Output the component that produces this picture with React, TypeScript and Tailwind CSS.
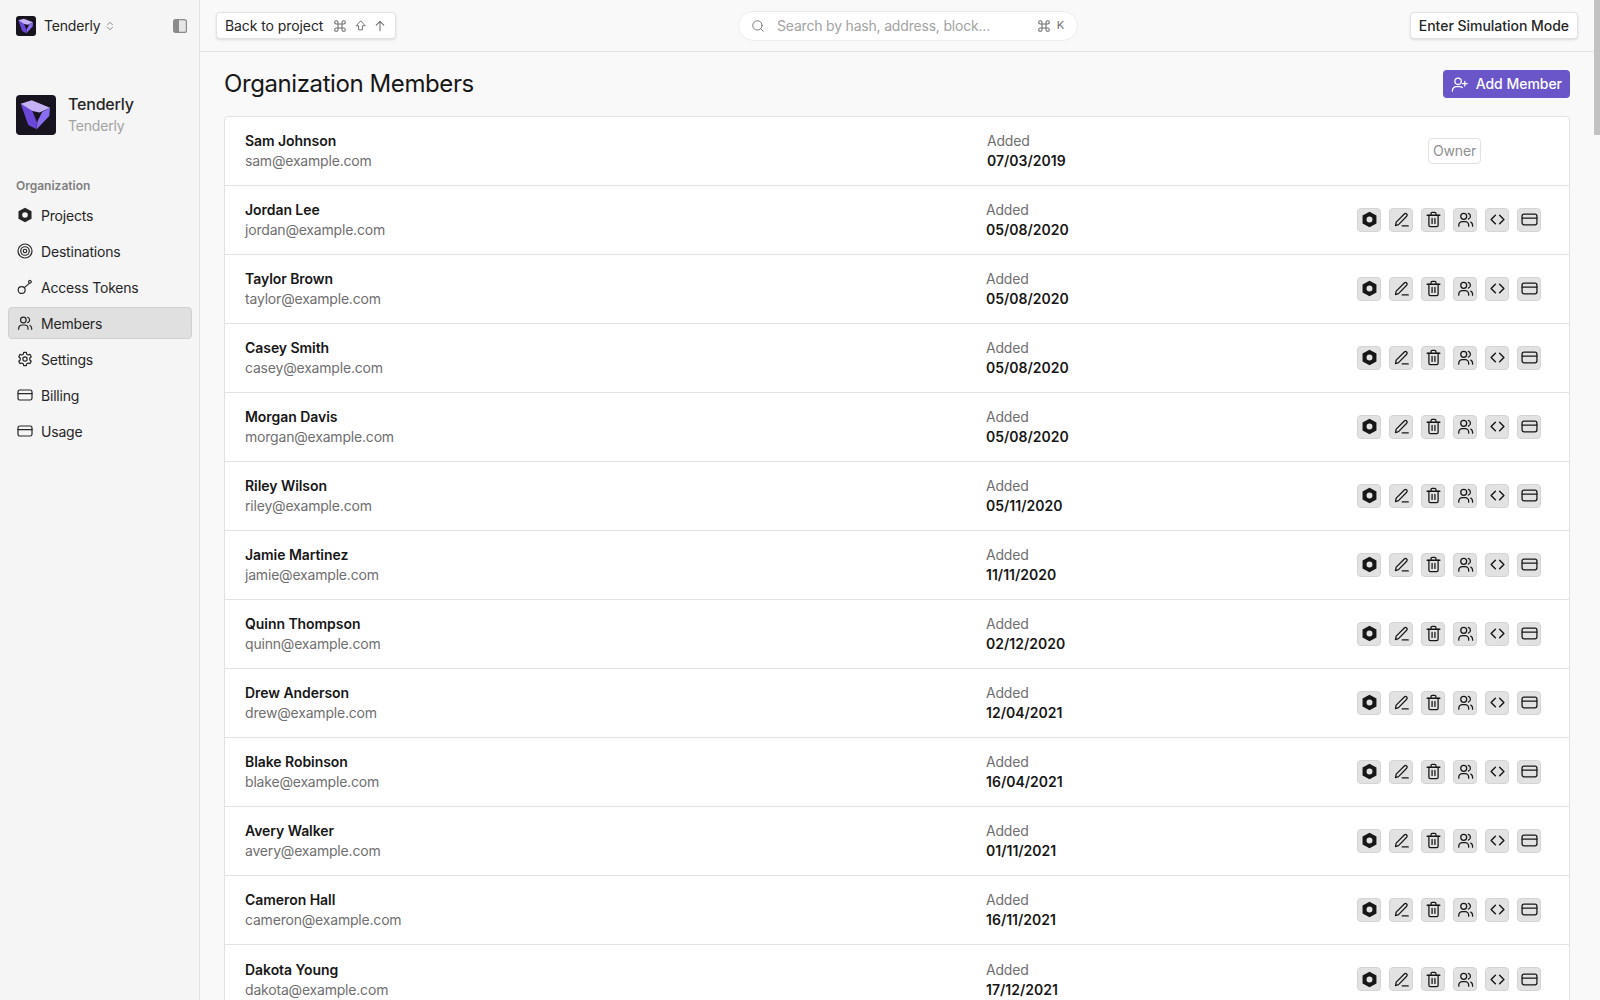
import React from "react";

const FONT = { fontFamily: "Inter, 'Noto Sans', sans-serif" };

type IconProps = { className?: string };

const Svg = ({ className = "w-[18px] h-[18px]", children, sw = 1.8 }: IconProps & { children: React.ReactNode; sw?: number }) => (
  <svg viewBox="0 0 24 24" fill="none" stroke="currentColor" strokeWidth={sw} strokeLinecap="round" strokeLinejoin="round" className={className}>
    {children}
  </svg>
);

const HexIcon = ({ className }: IconProps) => (
  <svg viewBox="0 0 24 24" className={className ?? "w-[18px] h-[18px]"}>
    <path fill="currentColor" fillRule="evenodd" d="M12 1 21.800 6.500V17.500L12 23 2.200 17.500V6.500ZM12 7.800a4.200 4.200 0 1 0 0 8.400 4.200 4.200 0 0 0 0-8.400Z" />
  </svg>
);
const TargetIcon = ({ className }: IconProps) => (
  <Svg className={className}>
    <circle cx="12" cy="12" r="10.500" />
    <circle cx="12" cy="12" r="6.400" />
    <circle cx="12" cy="12" r="2.600" />
  </Svg>
);
const KeyIcon = ({ className }: IconProps) => (
  <Svg className={className}>
    <circle cx="7" cy="16.500" r="5.200" />
    <path d="M11 13 18 7" />
    <path d="M17.500 3.500a2 2 0 1 1 3.400 2 2 2 0 0 1-3.400-2Z" />
  </Svg>
);
const UsersIcon = ({ className }: IconProps) => (
  <Svg className={className}>
    <circle cx="9.500" cy="7.500" r="4.200" />
    <path d="M2.500 21.500v-1.500a5 5 0 0 1 5-5h4a5 5 0 0 1 5 5v1.500" />
    <path d="M16 3.400a4.200 4.200 0 0 1 0 8" />
    <path d="M22 21.500v-1.500a5 5 0 0 0-2.500-4.300" />
  </Svg>
);
const GearIcon = ({ className }: IconProps) => (
  <Svg className={className}>
    <path d="M10 2h4l.6 2.900 2 1.100 2.800-.9 2 3.500-2.200 2v2.800l2.200 2-2 3.500-2.800-.9-2 1.100L14 22h-4l-.6-2.900-2-1.100-2.800.9-2-3.500 2.200-2v-2.800l-2.200-2 2-3.500 2.800.9 2-1.100Z" />
    <circle cx="12" cy="12" r="3.200" />
  </Svg>
);
const CardIcon = ({ className }: IconProps) => (
  <Svg className={className}>
    <rect x="1.500" y="4.500" width="21" height="15" rx="2.800" />
    <path d="M1.500 10h21" />
  </Svg>
);
const PenIcon = ({ className }: IconProps) => (
  <Svg className={className}>
    <path d="M3.500 20.500l1-4.800L16 4.200a2.300 2.300 0 0 1 3.300 3.300L7.800 19.200l-4.300 1.300Z" />
    <path d="M13 21h8.500" />
  </Svg>
);
const TrashIcon = ({ className }: IconProps) => (
  <Svg className={className}>
    <path d="M3 6h18" />
    <path d="M8.500 6V3.800A1.800 1.800 0 0 1 10.300 2h3.400a1.800 1.800 0 0 1 1.800 1.800V6" />
    <path d="M5.500 6v14a2 2 0 0 0 2 2h9a2 2 0 0 0 2-2V6" />
    <path d="M10 10.500v7M14 10.500v7" />
  </Svg>
);
const CodeIcon = ({ className }: IconProps) => (
  <Svg className={className} sw={2}>
    <path d="M9 6 3 12l6 6" />
    <path d="M15 6l6 6-6 6" />
  </Svg>
);
const UserPlusIcon = ({ className }: IconProps) => (
  <Svg className={className}>
    <circle cx="10" cy="7.500" r="4.500" />
    <path d="M2 21.500v-1a5.500 5.500 0 0 1 5.500-5.500h5a5.500 5.500 0 0 1 3.500 1.300" />
    <path d="M19.500 7.500v6.500M16.300 10.800h6.500" />
  </Svg>
);
const SearchIcon = ({ className }: IconProps) => (
  <Svg className={className} sw={1.6}>
    <circle cx="11" cy="11" r="8" />
    <path d="M21 21 17 17" />
  </Svg>
);
const CommandIcon = ({ className }: IconProps) => (
  <Svg className={className} sw={1.6}>
    <path d="M9 9h6v6H9ZM9 9H6.500A2.500 2.500 0 1 1 9 6.500ZM15 9V6.500A2.500 2.500 0 1 1 17.500 9ZM15 15h2.500a2.500 2.500 0 1 1-2.500 2.500ZM9 15v2.500A2.500 2.500 0 1 1 6.500 15Z" />
  </Svg>
);
const ShiftIcon = ({ className }: IconProps) => (
  <Svg className={className}>
    <path d="M12 4 4 12.500h4.500V20h7v-7.500H20Z" />
  </Svg>
);
const ArrowUpIcon = ({ className }: IconProps) => (
  <Svg className={className}>
    <path d="M12 20V4M5.500 10.500 12 4l6.500 6.500" />
  </Svg>
);
const ChevronsIcon = ({ className }: IconProps) => (
  <Svg className={className} sw={1.6}>
    <path d="M7 9.500 12 4.500l5 5M7 14.500l5 5 5-5" />
  </Svg>
);
const PanelIcon = ({ className }: IconProps) => (
  <svg viewBox="0 0 14 14" className={className}>
    <rect x="0.600" y="0.600" width="12.800" height="12.800" rx="2" fill="#e6e6e6" stroke="#8a8a8a" strokeWidth="1.200" />
    <path d="M2.500 0.600h3.500v12.800H2.500a2 2 0 0 1-1.900-2V2.500a2 2 0 0 1 1.900-1.900Z" fill="#8a8a8a" />
  </svg>
);

const Logo = ({ className }: IconProps) => (
  <div className={`${className} bg-[#17141f] flex items-center justify-center`}>
    <svg viewBox="0 0 40 40" className="w-full h-full">
      <path d="M34 12.700 33.300 21 20.700 34.300 21.500 26 26 17Z" fill="#8a6cf0" />
      <path d="M4.700 8.700 12.300 30 20.700 34.300 21 26 16 15Z" fill="#6a47d9" />
      <path d="M16 15 26 17 20.800 27Z" fill="#17141f" />
      <path d="M4.700 8.700 15.700 5.300 34 12.700 23.500 17.500 16.500 16Z" fill="#c4b2f5" />
    </svg>
  </div>
);

const nav = [
  { label: "Projects", Icon: HexIcon },
  { label: "Destinations", Icon: TargetIcon },
  { label: "Access Tokens", Icon: KeyIcon },
  { label: "Members", Icon: UsersIcon, active: true },
  { label: "Settings", Icon: GearIcon },
  { label: "Billing", Icon: CardIcon },
  { label: "Usage", Icon: CardIcon },
];

const rows = [
  ["Jordan Lee", "jordan@example.com", "05/08/2020"],
  ["Taylor Brown", "taylor@example.com", "05/08/2020"],
  ["Casey Smith", "casey@example.com", "05/08/2020"],
  ["Morgan Davis", "morgan@example.com", "05/08/2020"],
  ["Riley Wilson", "riley@example.com", "05/11/2020"],
  ["Jamie Martinez", "jamie@example.com", "11/11/2020"],
  ["Quinn Thompson", "quinn@example.com", "02/12/2020"],
  ["Drew Anderson", "drew@example.com", "12/04/2021"],
  ["Blake Robinson", "blake@example.com", "16/04/2021"],
  ["Avery Walker", "avery@example.com", "01/11/2021"],
  ["Cameron Hall", "cameron@example.com", "16/11/2021"],
  ["Dakota Young", "dakota@example.com", "17/12/2021"],
];

const actions = [HexIcon, PenIcon, TrashIcon, UsersIcon, CodeIcon, CardIcon];

function Row({ name, email, date, owner }: { name: string; email: string; date: string; owner?: boolean }) {
  return (
    <div className="h-[69px] flex items-center border-b border-[#e2e2e2] last:border-b-0 pl-5">
      <div className="w-[741px] shrink-0">
        <div className="text-[14px] leading-5 font-semibold tracking-[-0.004em] text-[#171717]">{name}</div>
        <div className="text-[14px] leading-5 text-[#6f6f6f]">{email}</div>
      </div>
      <div className={owner ? "w-[200px] shrink-0 pl-px" : "w-[200px] shrink-0"}>
        <div className="text-[14px] leading-5 text-[#6f6f6f]">Added</div>
        <div className="text-[14px] leading-5 font-semibold tracking-normal text-[#171717]">{date}</div>
      </div>
      {owner ? (
        <div className="ml-auto mr-[88px] mb-px h-[26px] px-1 flex items-center rounded border border-[#e2e2e2] text-[14px] text-[#8f8f8f]">Owner</div>
      ) : (
        <div className="ml-auto mr-[28px] mb-px flex gap-2">
          {actions.map((Icon, i) => (
            <button key={i} className="w-6 h-6 flex items-center justify-center rounded bg-[#e2e2e2] border border-[#d4d4d4] text-[#171717]">
              <Icon className="w-[17px] h-[17px]" />
            </button>
          ))}
        </div>
      )}
    </div>
  );
}

export default function App() {
  return (
    <div style={FONT} className="h-screen flex overflow-hidden bg-[#f9f9f9] text-[#171717] tracking-[-0.012em]">
      <aside className="w-[200px] shrink-0 bg-[#f5f5f5] border-r border-[#e2e2e2] flex flex-col">
        <div className="h-[51px] flex items-center pl-4 pr-3">
          <Logo className="w-5 h-5 rounded-[3px] overflow-hidden" />
          <span className="ml-2 text-[14px] text-[#262626]">Tenderly</span>
          <ChevronsIcon className="ml-1 w-3 h-3 text-[#6f6f6f]" />
          <PanelIcon className="ml-auto w-[14px] h-[14px]" />
        </div>
        <div className="mt-[43px] flex items-center pl-4">
          <Logo className="w-10 h-10 rounded overflow-hidden" />
          <div className="ml-3">
            <div className="text-[16px] leading-5 font-medium text-[#262626]">Tenderly</div>
            <div className="mt-[2px] text-[14px] leading-5 text-[#a3a3a3]">Tenderly</div>
          </div>
        </div>
        <div className="mt-[42px] pl-4 text-[12px] leading-4 font-semibold tracking-normal text-[#7f7f7f]">Organization</div>
        <nav className="mt-[5px] flex flex-col gap-1 pl-2 pr-[7px]">
          {nav.map(({ label, Icon, active }) => (
            <div
              key={label}
              className={
                active
                  ? "h-8 flex items-center gap-2 px-2 rounded border border-[#d0d0d0] bg-[#e0e0e0] text-[14px] text-[#262626]"
                  : "h-8 flex items-center gap-2 px-2 rounded border border-transparent text-[14px] text-[#262626]"
              }
            >
              <Icon className="w-4 h-4" />
              <span>{label}</span>
            </div>
          ))}
        </nav>
      </aside>

      <div className="flex-1 min-w-0">
        <header className="h-[52px] bg-[#f9f9f9] border-b border-[#e2e2e2] flex items-center pl-4 pr-4">
          <button className="w-[180px] h-[27px] px-2 flex items-center justify-between rounded bg-white border border-[#e2e2e2] shadow-sm text-[14px] tracking-[-0.006em] text-[#262626]">
            <span>Back to project</span>
            <span className="flex items-center gap-[6px] text-[#6f6f6f]">
              <CommandIcon className="w-4 h-4" />
              <ShiftIcon className="w-[13px] h-[13px]" />
              <ArrowUpIcon className="w-[14px] h-[14px]" />
            </span>
          </button>
          <div className="ml-[342px] w-[340px] h-[30px] flex items-center rounded-full bg-white border border-[#ececec] pl-3 pr-[13px] text-[14px] text-[#a3a3a3]">
            <SearchIcon className="w-[14px] h-[14px] text-[#737373]" />
            <span className="ml-3">Search by hash, address, block...</span>
            <span className="ml-auto flex items-center gap-[5px] text-[#6f6f6f]">
              <CommandIcon className="w-4 h-4" />
              <span className="text-[11px]">K</span>
            </span>
          </div>
          <button className="ml-auto h-[27px] px-2 flex items-center rounded bg-white border border-[#e2e2e2] shadow-sm text-[14px] font-medium tracking-[-0.002em] text-[#262626]">
            Enter Simulation Mode
          </button>
        </header>

        <main className="px-6">
          <div className="h-[64px] flex items-center justify-between">
            <h1 className="text-[24px] leading-8 tracking-[-0.017em] text-[#171717]">Organization Members</h1>
            <button className="h-7 px-2 flex items-center gap-2 rounded bg-[#6a56c9] text-white text-[14px] font-medium tracking-[-0.002em] leading-[26px]">
              <UserPlusIcon className="w-[17px] h-[17px]" />
              Add Member
            </button>
          </div>
          <div className="rounded border border-[#e2e2e2] bg-white">
            <Row name="Sam Johnson" email="sam@example.com" date="07/03/2019" owner />
            {rows.map(([n, e, d]) => (
              <Row key={n} name={n} email={e} date={d} />
            ))}
          </div>
        </main>
      </div>

      <div className="w-[6px] shrink-0 bg-[#f9f9f9]">
        <div className="h-[135px] bg-[#c2c2c2]" />
      </div>
    </div>
  );
}
